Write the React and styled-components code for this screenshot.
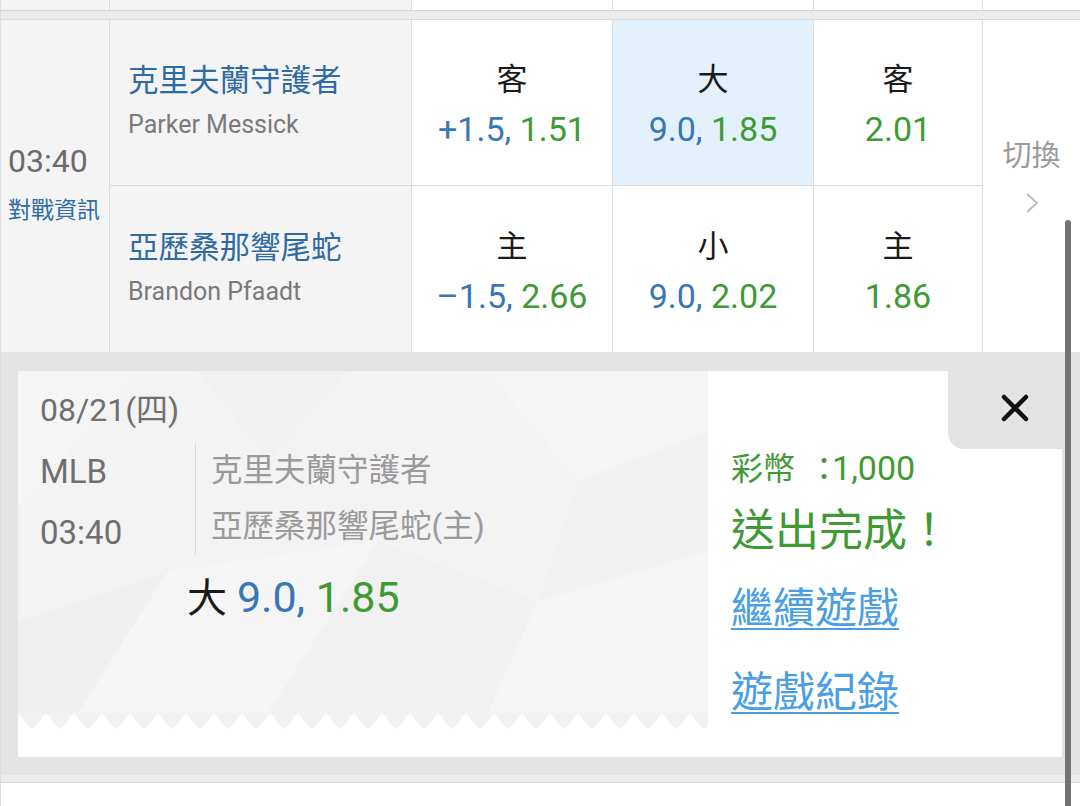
import * as React from "react"
import styled, {createGlobalStyle} from 'styled-components'

const GlobalStyle = createGlobalStyle`
html, body {
  margin: 0;
  padding: 0;
  background: #fff;
}
body {
  font-family: Roboto, "Noto Sans CJK TC", sans-serif;
  overflow: hidden;
}
`

const COLS = "109px 302px 201px 201px 169px 1fr"

const Screen = styled.div`
position: relative;
width: 1080px;
height: 806px;
overflow: hidden;
background: #fff;
border-left: 1px solid #dedede;
box-sizing: border-box;
`

const PrevRow = styled.div`
display: grid;
grid-template-columns: ${COLS};
height: 10px;
`

const PrevCell = styled.div`
border-right: 1px solid #dcdcdc;
background: ${p => p.$grey ? '#f4f4f5' : '#fff'};
&:last-child{ border-right: none; }
`

const Band = styled.div`
height: 8px;
background: #ececec;
border-top: 1px solid #d6d6d6;
border-bottom: 1px solid #dadada;
`

const GameRow = styled.div`
display: grid;
grid-template-columns: ${COLS};
grid-template-rows: 166px 166px;
`

const Cell = styled.div`
box-sizing: border-box;
display: flex;
flex-direction: column;
justify-content: center;
border-right: 1px solid #dcdcdc;
border-bottom: ${p => p.$top ? '1px solid #dcdcdc' : 'none'};
background: ${p => p.$bg || '#fff'};
`

const TimeCell = styled(Cell)`
grid-column: 1;
grid-row: 1 / 3;
padding: 0 0 4px 7px;
gap: 17px;
`

const Time = styled.div`
font-size: 32px;
line-height: 36px;
color: #6b6b6b;
`

const InfoLink = styled.div`
font-size: 23px;
line-height: 30px;
color: #2f6ca6;
`

const TeamCell = styled(Cell)`
grid-column: 2;
padding: 0 0 4px 18px;
gap: 9px;
`

const TeamName = styled.div`
font-size: 30.5px;
line-height: 40px;
color: #2f6aa3;
`

const Pitcher = styled.div`
font-size: 25px;
line-height: 30px;
color: #7a7a7a;
`

const OddsCell = styled(Cell)`
align-items: center;
padding-top: 4px;
gap: 9px;
`

const OddsLabel = styled.div`
font-size: 31px;
line-height: 40px;
color: #1a1a1a;
`

const OddsValue = styled.div`
font-size: 34px;
line-height: 40px;
white-space: nowrap;
`

const Blue = styled.span`
color: #3876b6;
`

const Green = styled.span`
color: #3f9a35;
`

const SwitchCell = styled(Cell)`
grid-column: 6;
grid-row: 1 / 3;
border-right: none;
align-items: center;
padding-bottom: 22px;
gap: 16px;
`

const SwitchText = styled.div`
font-size: 29px;
line-height: 40px;
color: #9a9a9a;
`

const Overlay = styled.div`
background: #e4e4e4;
padding: 19px 18px 18px 17px;
`

const Ticket = styled.div`
position: relative;
display: flex;
height: 386px;
background: #fff;
`

const TicketLeft = styled.div`
width: 690px;
display: flex;
flex-direction: column;
`

const TicketBody = styled.div`
position: relative;
height: 342px;
background: #f3f3f3;
padding: 19px 0 0 22px;
box-sizing: border-box;
overflow: hidden;
`

const Facets = styled.svg`
position: absolute;
left: 0;
top: 0;
width: 100%;
height: 100%;
`

const Layer = styled.div`
position: relative;
`

const Teeth = styled.div`
height: 17px;
background:
  linear-gradient(to bottom right, #f2f2f2 50%, transparent 50%) 0 0 / 28px 34px repeat-x,
  linear-gradient(to bottom left, #f2f2f2 50%, transparent 50%) 0 0 / 28px 34px repeat-x;
background-position: 14px -17px, 14px -17px;
`

const DateLine = styled.div`
font-size: 32px;
line-height: 40px;
color: #6f6f6f;
`

const InfoRow = styled.div`
display: flex;
align-items: flex-start;
margin-top: 13px;
`

const LeagueCol = styled.div`
width: 155px;
display: flex;
flex-direction: column;
gap: 21px;
padding-top: 9px;
`

const Plain = styled.div`
font-size: 33px;
line-height: 40px;
color: #6f6f6f;
`

const TeamsCol = styled.div`
border-left: 1px solid #d9d9d9;
padding-left: 15px;
`

const TicketTeam = styled.div`
font-size: 31.5px;
line-height: 56px;
color: #9a9a9a;
`

const Pick = styled.div`
margin: 17px 0 0 147px;
font-size: 43px;
line-height: 50px;
white-space: nowrap;
`

const PickSide = styled.span`
font-size: 40px;
color: #1a1a1a;
`

const TicketRight = styled.div`
flex: 1;
display: flex;
flex-direction: column;
align-items: flex-start;
padding: 77px 0 0 23px;
`

const Coins = styled.div`
font-size: 32px;
line-height: 40px;
color: #3f9a35;
white-space: nowrap;
`

const Colon = styled.span`
margin-left: 13px;
letter-spacing: -8px;
`

const Amount = styled.span`
font-size: 34px;
`

const Done = styled.div`
margin-top: 14px;
font-size: 44px;
line-height: 56px;
color: #3f9a35;
`

const ActionLink = styled.a`
margin-top: ${p => p.$gap}px;
font-size: 42px;
line-height: 52px;
color: #4a9ee3;
text-decoration: underline;
text-decoration-thickness: 2px;
text-underline-offset: 5px;
cursor: pointer;
`

const CloseTab = styled.button`
position: absolute;
top: 0;
right: 0;
width: 114px;
height: 78px;
border: none;
margin: 0;
padding: 0 0 5px 19px;
background: #e4e4e4;
border-bottom-left-radius: 16px;
display: flex;
align-items: center;
justify-content: center;
cursor: pointer;
`

const BottomStrip = styled.div`
height: 7px;
background: #ededed;
border-bottom: 1px solid #d8d8d8;
`

const ScrollThumb = styled.div`
position: absolute;
right: 9px;
top: 220px;
bottom: 0;
width: 6px;
border-radius: 3px 3px 0 0;
background: #737373;
`

const games = [
  {
    team: '克里夫蘭守護者',
    pitcher: 'Parker Messick',
    spread: {label: '客', line: '+1.5,', odds: '1.51'},
    total: {label: '大', line: '9.0,', odds: '1.85', active: true},
    money: {label: '客', odds: '2.01'},
  },
  {
    team: '亞歷桑那響尾蛇',
    pitcher: 'Brandon Pfaadt',
    spread: {label: '主', line: '–1.5,', odds: '2.66'},
    total: {label: '小', line: '9.0,', odds: '2.02'},
    money: {label: '主', odds: '1.86'},
  },
]

const Odds = ({bet, col, top}) => (
  <OddsCell $top={top} $bg={bet.active ? '#e3f1fc' : '#fff'} style={{gridColumn: col}}>
    <OddsLabel>{bet.label}</OddsLabel>
    <OddsValue>
      {bet.line && <Blue>{bet.line} </Blue>}
      <Green>{bet.odds}</Green>
    </OddsValue>
  </OddsCell>
)

const App = () => {
  return(
    <>
    <GlobalStyle />
    <Screen>
      <PrevRow>
        <PrevCell $grey />
        <PrevCell $grey />
        <PrevCell />
        <PrevCell />
        <PrevCell />
        <PrevCell />
      </PrevRow>
      <Band />

      <GameRow>
        <TimeCell $bg="#f4f4f5">
          <Time>03:40</Time>
          <InfoLink>對戰資訊</InfoLink>
        </TimeCell>
        {games.map((g, i) => (
          <React.Fragment key={g.team}>
            <TeamCell $top={i === 0} $bg="#f4f4f5">
              <TeamName>{g.team}</TeamName>
              <Pitcher>{g.pitcher}</Pitcher>
            </TeamCell>
            <Odds bet={g.spread} col={3} top={i === 0} />
            <Odds bet={g.total} col={4} top={i === 0} />
            <Odds bet={g.money} col={5} top={i === 0} />
          </React.Fragment>
        ))}
        <SwitchCell>
          <SwitchText>切換</SwitchText>
          <svg width="14" height="22" viewBox="0 0 14 22">
            <polyline points="2,2 12,11 2,20" fill="none" stroke="#bdbdbd" strokeWidth="2" />
          </svg>
        </SwitchCell>
      </GameRow>

      <Overlay>
        <Ticket>
          <TicketLeft>
            <TicketBody>
              <Facets viewBox="0 0 690 342" preserveAspectRatio="none">
                <polygon points="0,0 120,0 0,140" fill="#f5f5f5" />
                <polygon points="180,0 330,0 250,90" fill="#f1f1f1" />
                <polygon points="470,0 690,0 690,60 560,110" fill="#f5f5f5" />
                <polygon points="0,250 150,200 60,342 0,342" fill="#f0f0f0" />
                <polygon points="150,200 360,170 250,342 60,342" fill="#f5f5f5" />
                <polygon points="360,170 520,230 470,342 250,342" fill="#f1f1f1" />
                <polygon points="520,230 690,180 690,342 470,342" fill="#f5f5f5" />
                <polygon points="560,110 690,60 690,180 520,230" fill="#f1f1f1" />
              </Facets>
              <Layer>
                <DateLine>08/21(四)</DateLine>
                <InfoRow>
                  <LeagueCol>
                    <Plain>MLB</Plain>
                    <Plain>03:40</Plain>
                  </LeagueCol>
                  <TeamsCol>
                    <TicketTeam>克里夫蘭守護者</TicketTeam>
                    <TicketTeam>亞歷桑那響尾蛇(主)</TicketTeam>
                  </TeamsCol>
                </InfoRow>
                <Pick>
                  <PickSide>大 </PickSide>
                  <Blue>9.0, </Blue>
                  <Green>1.85</Green>
                </Pick>
              </Layer>
            </TicketBody>
            <Teeth />
          </TicketLeft>

          <TicketRight>
            <Coins>彩幣<Colon>：</Colon><Amount>1,000</Amount></Coins>
            <Done>送出完成！</Done>
            <ActionLink $gap={24}>繼續遊戲</ActionLink>
            <ActionLink $gap={32}>遊戲紀錄</ActionLink>
          </TicketRight>

          <CloseTab aria-label="close">
            <svg width="30" height="30" viewBox="0 0 30 30">
              <path d="M4 4 L26 26 M26 4 L4 26" stroke="#111" strokeWidth="4.5" strokeLinecap="round" />
            </svg>
          </CloseTab>
        </Ticket>
      </Overlay>
      <BottomStrip />

      <ScrollThumb />
    </Screen>
    </>
  )
}

export default App
